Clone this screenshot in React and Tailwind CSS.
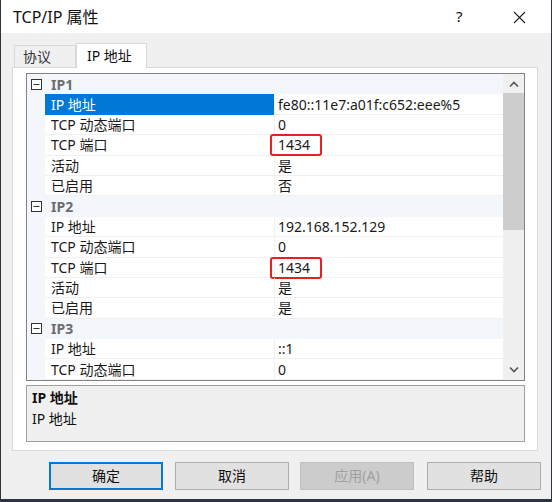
import React from "react";

const rows = [
  { cat: "IP1" },
  { name: "IP 地址", value: "fe80::11e7:a01f:c652:eee%5", selected: true },
  { name: "TCP 动态端口", value: "0" },
  { name: "TCP 端口", value: "1434", mark: true },
  { name: "活动", value: "是" },
  { name: "已启用", value: "否" },
  { cat: "IP2" },
  { name: "IP 地址", value: "192.168.152.129" },
  { name: "TCP 动态端口", value: "0" },
  { name: "TCP 端口", value: "1434", mark: true },
  { name: "活动", value: "是" },
  { name: "已启用", value: "是" },
  { cat: "IP3" },
  { name: "IP 地址", value: "::1" },
  { name: "TCP 动态端口", value: "0" },
];

const MinusBox = () => (
  <svg width="11" height="11" viewBox="0 0 11 11" className="block">
    <rect x="0.5" y="0.5" width="10" height="10" fill="#fff" stroke="#333" />
    <line x1="2.5" y1="5.5" x2="8.5" y2="5.5" stroke="#333" />
  </svg>
);

const GridRow = ({ row }) => {
  if (row.cat) {
    return (
      <div className="flex h-[20.4px] bg-[#f3f6fb] items-center">
        <div className="w-[18px] flex justify-center">
          <MinusBox />
        </div>
        <span className="pl-[6px] pt-[1px] font-bold text-[#6d6d6d]">{row.cat}</span>
      </div>
    );
  }
  return (
    <div className="flex h-[20.4px]">
      <div className="w-[18px] bg-[#f3f6fb]"></div>
      <div
        className={
          row.selected
            ? "w-[229px] flex items-center pl-[6px] pt-[1px] bg-[#0078d7] text-white"
            : "w-[229px] flex items-center pl-[6px] pt-[1px] border-b border-[#f0f0f0] text-[#1a1a1a]"
        }
      >
        {row.name}
      </div>
      <div className="relative flex-1 flex items-center pl-[3px] pt-[1px] border-l border-[#f0f0f0] border-b text-[#1a1a1a]">
        {row.value}
        {row.mark && (
          <div className="absolute left-[-5px] top-[-1px] w-[52px] h-[22px] border-2 border-[#e8201e] rounded-[3px]"></div>
        )}
      </div>
    </div>
  );
};

const Btn = ({ children, primary, disabled }) => {
  let cls =
    "w-[114px] h-[28px] flex items-center justify-center border bg-[#e1e1e1] border-[#adadad] text-[#111]";
  if (primary) cls = "w-[114px] h-[28px] flex items-center justify-center border-2 bg-[#e1e1e1] border-[#0078d7] text-[#111]";
  if (disabled) cls = "w-[114px] h-[28px] flex items-center justify-center border bg-[#cccccc] border-[#bfbfbf] text-[#a0a0a0]";
  return <div className={cls}>{children}</div>;
};

export default function App() {
  return (
    <div
      className="w-[552px] h-[502px] bg-[#2b3440] flex text-[14px] leading-none"
      style={{ fontFamily: '"Noto Sans", "Noto Sans CJK SC", sans-serif' }}
    >
      <div className="ml-[1px] w-[550px] h-[499px] bg-[#f0f0f0] flex flex-col">
        {/* title bar */}
        <div className="h-[33px] bg-white flex items-center relative">
          <span className="pl-[12px] text-[16px] text-[#111]">TCP/IP 属性</span>
          <span className="absolute left-[455px] top-[9px] text-[15px] text-[#111]">?</span>
          <svg className="absolute left-[512px] top-[11px]" width="13" height="13" viewBox="0 0 13 13">
            <path d="M1 1 L12 12 M12 1 L1 12" stroke="#222" strokeWidth="1.1" />
          </svg>
        </div>

        {/* tabs */}
        <div className="flex items-end mt-[10px] pl-[13px] h-[24px] relative z-10">
          <div className="w-[62px] h-[22px] border border-b-0 border-[#d9d9d9] bg-[#f0f0f0] flex items-center pl-[8px] text-[#333]">
            协议
          </div>
          <div className="w-[71px] h-[25px] mb-[-1px] border border-b-0 border-[#d9d9d9] bg-white flex items-center pl-[10px] text-[#111]">
            IP 地址
          </div>
        </div>

        {/* panel */}
        <div className="ml-[11px] w-[526px] h-[384px] bg-white border border-[#d9d9d9] pl-[13px] pt-[5px]">
          <div className="w-[499px] h-[308px] border border-[#828282] flex overflow-hidden">
            <div className="w-[476px] flex flex-col">
              {rows.map((r, i) => (
                <GridRow key={i} row={r} />
              ))}
            </div>
            <div className="flex-1 bg-[#f0f0f0] flex flex-col items-center">
              <svg className="mt-[7px]" width="10" height="7" viewBox="0 0 10 7">
                <path d="M1 5.5 L5 1.5 L9 5.5" stroke="#555" strokeWidth="1.6" fill="none" />
              </svg>
              <div className="mt-[5px] w-full h-[137px] bg-[#cdcdcd]"></div>
              <svg className="mt-auto mb-[7px]" width="10" height="7" viewBox="0 0 10 7">
                <path d="M1 1.5 L5 5.5 L9 1.5" stroke="#555" strokeWidth="1.6" fill="none" />
              </svg>
            </div>
          </div>
          <div className="mt-[4px] w-[499px] h-[57px] border border-[#a0a0a0] bg-[#f0f0f0] px-[5px] pt-[5px] text-[#111]">
            <div className="font-bold">IP 地址</div>
            <div className="mt-[7px]">IP 地址</div>
          </div>
        </div>

        {/* buttons */}
        <div className="flex mt-[11px] pl-[48px]">
          <Btn primary>确定</Btn>
          <div className="ml-[12px]">
            <Btn>取消</Btn>
          </div>
          <div className="ml-[11px]">
            <Btn disabled>应用(A)</Btn>
          </div>
          <div className="ml-[13px]">
            <Btn>帮助</Btn>
          </div>
        </div>
      </div>
    </div>
  );
}
